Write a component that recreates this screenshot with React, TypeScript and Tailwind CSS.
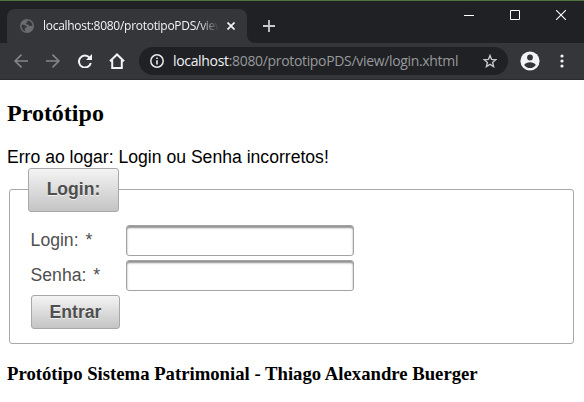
import React from "react";

const uiFont = "font-['Open_Sans','Noto_Sans',sans-serif]";

function TabStrip() {
  return (
    <div className="flex h-[43px] border-t border-[#4f7440] bg-[#202124] pl-[7px]">
      <div className="mt-2 flex h-[34px] w-[240px] shrink-0 items-center rounded-t-lg bg-[#35363a] pl-[13px]">
        <svg className="size-[14px] shrink-0" viewBox="0 0 14 14">
          <circle cx="7" cy="7" r="7" fill="#696b6f" />
          <path
            d="M2 5.5c1.8.1 2.6 1 3.5 1.1 1.2.1 1.5.9 1 1.7-.5.7-1.600.4-1.800 1.400-.2 1 .8 1.200.4 2.600C2.900 11.500 1.500 9.500 1.500 7.300zM7.600 1.600c-.4 1 .2 1.200-.5 1.900-.6.6-1.200.5-1 1.300.3.9 1.500.5 2.300.9.800.4.500 1.300 1.600 1.400.9 0 1.300-.7 2.400-.3 0-2.700-1.900-5-4.800-5.200z"
            fill="#35363a"
          />
        </svg>
        <div
          className={`ml-[9px] w-[182px] shrink-0 whitespace-nowrap text-[12px] leading-4 tracking-[-0.28px] text-[#f1f3f4] [mask-image:linear-gradient(to_right,black_156px,transparent_176px)] ${uiFont}`}
        >
          localhost:8080/prototipoPDS/view
        </div>
        <svg className="ml-[2px] size-[8px] shrink-0" viewBox="0 0 8 8" stroke="#f1f3f4" strokeWidth="1.7">
          <path d="M.5.5l7 7M7.500.5l-7 7" />
        </svg>
      </div>
      <svg className="mt-[34px] size-2 shrink-0" viewBox="0 0 8 8">
        <path d="M0 0a8 8 0 0 0 8 8H0z" fill="#35363a" />
      </svg>
      <svg className="ml-[8px] mt-[19px] size-[12px] shrink-0" viewBox="0 0 12 12" stroke="#c9cacc" strokeWidth="1.8">
        <path d="M6 0v12M0 6h12" />
      </svg>
      <div className="ml-auto mr-[18px] mt-[9px] flex h-[10px] gap-[36px]">
        <svg className="size-[10px]" viewBox="0 0 10 10">
          <path d="M0 5.500h10" stroke="#fff" />
        </svg>
        <svg className="size-[10px]" viewBox="0 0 10 10" fill="none" stroke="#fff">
          <path d="M.5.5h9v9h-9z" />
        </svg>
        <svg className="size-[10px]" viewBox="0 0 10 10" stroke="#fff" strokeWidth="1.1">
          <path d="M0 0l10 10M10 0L0 10" />
        </svg>
      </div>
    </div>
  );
}

function Toolbar() {
  return (
    <div className="flex h-[37px] items-center border-b border-[#292a2d] bg-[#35363a] pl-[14px]">
      <svg className="h-[14px] w-[14px]" viewBox="0 0 14 14" fill="none" stroke="#85868a" strokeWidth="1.6">
        <path d="M14 7H1.200M7.500.6L1.100 7l6.400 6.400" />
      </svg>
      <svg className="ml-[18px] h-[14px] w-[14px]" viewBox="0 0 14 14" fill="none" stroke="#85868a" strokeWidth="1.6">
        <path d="M0 7h12.800M6.500.6L12.900 7l-6.400 6.400" />
      </svg>
      <svg className="ml-[18px] h-[14px] w-[14px]" viewBox="0 0 14 14">
        <path d="M11.600 3.700A6 6 0 1 0 12.800 9" fill="none" stroke="#f1f3f4" strokeWidth="2" />
        <path d="M14 0v6H8z" fill="#f1f3f4" />
      </svg>
      <svg className="ml-[17px] h-[16px] w-[16px]" viewBox="0 0 16 16" fill="none" stroke="#f1f3f4" strokeWidth="2">
        <path d="M1 8.300L8 1.500l7 6.800M3.200 7v8h9.600V7" />
      </svg>
      <div className="ml-[14px] flex h-7 w-[369px] items-center rounded-full bg-[#202124] pl-[11px]">
        <svg className="size-[14px] shrink-0" viewBox="0 0 14 14">
          <circle cx="7" cy="7" r="6.200" fill="none" stroke="#e8eaed" strokeWidth="1.500" />
          <path d="M6.200 3.500h1.600v1.500H6.200zM6.200 6.200h1.600v4.300H6.200z" fill="#e8eaed" />
        </svg>
        <div className={`ml-[9px] whitespace-nowrap text-[14px] leading-5 tracking-[-0.33px] text-[#97999c] ${uiFont}`}>
          <span className="text-[#f1f3f4]">localhost</span>:8080/prototipoPDS/view/login.xhtml
        </div>
        <svg className="ml-auto mr-[11px] size-[14px] shrink-0" viewBox="0 0 14 14" fill="none" stroke="#c5c7ca" strokeWidth="1.400">
          <path d="M7 1.500l1.600 3.900 4.200.3-3.200 2.700 1 4.200L7 10.400l-3.600 2.200 1-4.200-3.200-2.700 4.200-.3z" />
        </svg>
      </div>
      <svg className="ml-[12px] size-[20px]" viewBox="0 0 20 20">
        <circle cx="10" cy="10" r="9.600" fill="#f1f3f4" />
        <circle cx="10" cy="6.500" r="2.900" fill="#35363a" />
        <path d="M4.200 13.900c.9-1.600 3.400-2.700 5.800-2.700s4.900 1.100 5.800 2.700c-1.300 1.900-3.400 3.100-5.800 3.100s-4.500-1.200-5.800-3.100z" fill="#35363a" />
      </svg>
      <svg className="ml-[20px] h-[14px] w-[4px]" viewBox="0 0 4 14" fill="#f1f3f4">
        <circle cx="2" cy="2" r="1.600" />
        <circle cx="2" cy="7" r="1.600" />
        <circle cx="2" cy="12" r="1.600" />
      </svg>
    </div>
  );
}

function Field({ label, type }: { label: string; type: string }) {
  return (
    <label className="flex h-[31px] items-center">
      <span className="w-[96px] pb-px pl-[0.6px] text-[#4f4f4f]">
        {label}: <span className="pl-[2px]">*</span>
      </span>
      <input
        type={type}
        className="h-[31px] w-[228px] rounded-[3px] border border-[#a3a3a3] bg-white shadow-[inset_0_2px_2px_#8f8f8f] outline-none"
      />
    </label>
  );
}

export default function App() {
  return (
    <div className="h-[402px] w-[584px] overflow-hidden bg-white font-['Liberation_Sans',Arial,sans-serif] text-[17.6px] leading-5 text-black">
      <TabStrip />
      <Toolbar />
      <main className="pl-[7px] pt-5">
        <h2 className="font-['Liberation_Serif','Times_New_Roman',serif] text-2xl/[27px] font-bold">Protótipo</h2>
        <p className="mt-5">Erro ao logar: Login ou Senha incorretos!</p>
        <fieldset className="ml-[2px] mt-px h-[176px] w-[565px] rounded-[3px] border border-[#a8a8a8] pl-[20px]">
          <legend className="ml-[-2px] h-[43px] w-[91px]">
            <div className="h-[44px] rounded-[3px] border border-[#a8a8a8] bg-linear-to-b from-[#f4f4f4] to-[#c4c4c4] text-center font-bold leading-[41px] text-[#4f4f4f] [text-shadow:0_1px_0_rgba(255,255,255,0.7)]">
              Login:
            </div>
          </legend>
          <div className="flex flex-col gap-1 pt-[14px]">
            <Field label="Login" type="text" />
            <Field label="Senha" type="password" />
            <button className="ml-px h-[34px] w-[89px] rounded-[3px] border border-[#a8a8a8] bg-linear-to-b from-[#f4f4f4] to-[#c4c4c4] text-center font-bold leading-[32px] text-[#4f4f4f] [text-shadow:0_1px_0_rgba(255,255,255,0.7)]">
              Entrar
            </button>
          </div>
        </fieldset>
        <h3 className="mt-[19px] font-['Liberation_Serif','Times_New_Roman',serif] text-[18.72px] font-bold leading-[21px]">
          Protótipo Sistema Patrimonial - Thiago Alexandre Buerger
        </h3>
      </main>
    </div>
  );
}
